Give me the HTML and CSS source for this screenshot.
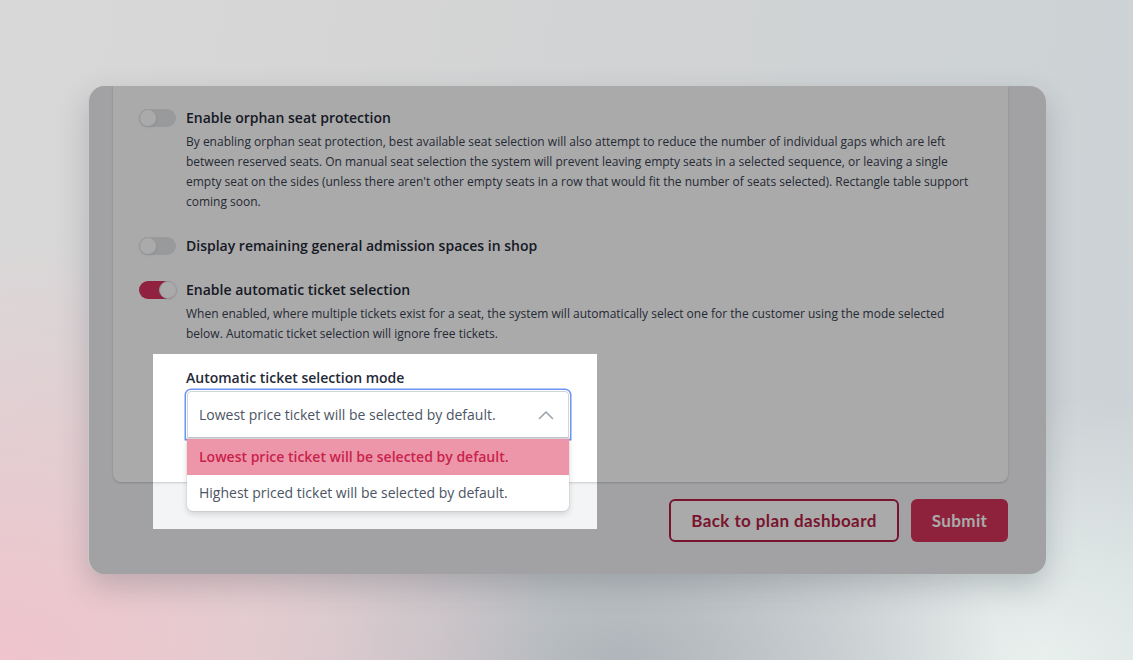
FILE: index.html
```html
<!DOCTYPE html>
<html lang="en">
<head>
<meta charset="utf-8">
<title>Plan settings</title>
<link rel="stylesheet" href="styles.css">
</head>
<body>
<div class="window">
  <div class="card">
    <div class="setting">
      <span class="toggle"><span class="knob"></span></span>
      <div class="setting-body">
        <div class="setting-title">Enable orphan seat protection</div>
        <p class="setting-desc">By enabling orphan seat protection, best available seat selection will also attempt to reduce the number of individual gaps which are left between reserved seats. On manual seat selection the system will prevent leaving empty seats in a selected sequence, or leaving a single empty seat on the sides (unless there aren't other empty seats in a row that would fit the number of seats selected). Rectangle table support coming soon.</p>
      </div>
    </div>
    <div class="setting">
      <span class="toggle"><span class="knob"></span></span>
      <div class="setting-body">
        <div class="setting-title">Display remaining general admission spaces in shop</div>
      </div>
    </div>
    <div class="setting">
      <span class="toggle on"><span class="knob"></span></span>
      <div class="setting-body">
        <div class="setting-title">Enable automatic ticket selection</div>
        <p class="setting-desc">When enabled, where multiple tickets exist for a seat, the system will automatically select one for the customer using the mode selected below. Automatic ticket selection will ignore free tickets.</p>
      </div>
    </div>
    <div class="mode">
      <div class="mode-label">Automatic ticket selection mode</div>
      <div class="select">
        <span class="select-value">Lowest price ticket will be selected by default.</span>
        <svg class="chevron" width="16" height="10" viewBox="0 0 16 10" aria-hidden="true"><path d="M1.5 8.5 L8 2 L14.5 8.5" fill="none" stroke="#9ca3af" stroke-width="1.6" stroke-linecap="round" stroke-linejoin="round"/></svg>
        <ul class="options">
          <li class="option selected">Lowest price ticket will be selected by default.</li>
          <li class="option">Highest priced ticket will be selected by default.</li>
        </ul>
      </div>
    </div>
  </div>
  <div class="actions">
    <button class="btn btn-outline">Back to plan dashboard</button>
    <button class="btn btn-primary">Submit</button>
  </div>
  <div class="spotlight"></div>
</div>
</body>
</html>
```
FILE: styles.css
```css
html, body {
  margin: 0;
  padding: 0;
}
body {
  width: 1133px;
  height: 660px;
  overflow: hidden;
  font-family: "Open Sans", "Liberation Sans", sans-serif;
  background:
    radial-gradient(ellipse 560px 420px at 0% 100%, rgba(240, 196, 204, 1), rgba(240, 196, 204, 0) 100%),
    radial-gradient(ellipse 380px 220px at 55% 100%, rgba(170, 176, 182, 0.85), rgba(170, 176, 182, 0) 100%),
    radial-gradient(ellipse 420px 260px at 92% 100%, rgba(232, 240, 238, 1), rgba(232, 240, 238, 0) 100%),
    linear-gradient(100deg, #d9d8d8 0%, #d2d3d4 50%, #ccd3d6 100%);
  padding-top: 86px;
  box-sizing: border-box;
}
.window {
  position: relative;
  margin-left: 88px;
  width: 958px;
  height: 488px;
  box-sizing: border-box;
  background: #f3f4f6;
  border-left: 1px solid #c6c8cc;
  border-radius: 16px;
  overflow: hidden;
  box-shadow: 0 12px 30px rgba(40, 50, 60, 0.22);
}
.card {
  margin-left: 24px;
  width: 895px;
  height: 396px;
  box-sizing: border-box;
  background: #ffffff;
  border-radius: 0 0 8px 8px;
  box-shadow: 0 1px 3px rgba(0, 0, 0, 0.12), 0 1px 2px rgba(0, 0, 0, 0.06);
  padding: 22px 26px 0 26px;
}
.setting {
  display: flex;
  gap: 10px;
  margin-bottom: 24px;
}
.setting-body {
  width: 790px;
}
.setting-title {
  font-size: 14px;
  font-weight: 600;
  line-height: 20px;
  color: #1f2937;
}
.setting-desc {
  margin: 4px 0 0 0;
  font-size: 12px;
  line-height: 20px;
  color: #374151;
}
.toggle {
  position: relative;
  flex: none;
  width: 37px;
  height: 18px;
  margin-top: 1px;
  border-radius: 9px;
  background: #e5e7eb;
}
.toggle .knob {
  position: absolute;
  left: 0;
  top: 0;
  width: 18px;
  height: 18px;
  box-sizing: border-box;
  border-radius: 50%;
  background: #ffffff;
  border: 1px solid #e1e3e7;
  box-shadow: 0 1px 2px rgba(0, 0, 0, 0.08);
}
.toggle.on {
  background: #d93360;
}
.toggle.on .knob {
  left: 20px;
}
.mode {
  margin-left: 47px;
  margin-top: 3px;
  width: 386px;
}
.mode-label {
  font-size: 14px;
  font-weight: 600;
  line-height: 20px;
  color: #1f2937;
  margin-bottom: 3px;
}
.select {
  position: relative;
  margin-left: 1px;
  width: 382px;
  height: 47px;
  box-sizing: border-box;
  border: 1px solid #d1d5db;
  border-radius: 4px 4px 0 0;
  background: #ffffff;
  box-shadow: 0 0 0 1px #ffffff, 0 0 0 2.5px #6b93f2;
  display: flex;
  align-items: center;
  padding: 0 14px 0 11px;
}
.select-value {
  flex: 1;
  font-size: 14px;
  color: #4b5563;
}
.chevron {
  flex: none;
}
.options {
  position: absolute;
  left: -1px;
  top: 46px;
  width: 382px;
  margin: 0;
  padding: 0;
  list-style: none;
  background: #ffffff;
  border-top: 1px solid #d1d5db;
  border-radius: 0 0 6px 6px;
  box-shadow: 0 3px 6px rgba(0, 0, 0, 0.14), 0 0 0 1px rgba(0, 0, 0, 0.05);
  overflow: hidden;
}
.option {
  height: 36px;
  line-height: 36px;
  padding-left: 12px;
  font-size: 14px;
  color: #4b5563;
}
.option.selected {
  background: #ee96a9;
  color: #c8234c;
  font-weight: 600;
}
.actions {
  display: flex;
  justify-content: flex-end;
  gap: 12px;
  width: 919px;
  margin-top: 17px;
}
.btn {
  height: 43px;
  box-sizing: border-box;
  border-radius: 6px;
  font-family: "Lato", "Liberation Sans", sans-serif;
  font-weight: 700;
  font-size: 17px;
  letter-spacing: 0.4px;
  cursor: pointer;
}
.btn-outline {
  width: 230px;
  background: #ffffff;
  border: 2px solid #b61f47;
  color: #b61f47;
}
.btn-primary {
  width: 97px;
  background: #d6335a;
  border: none;
  color: #ffffff;
}
.spotlight {
  position: absolute;
  left: 64px;
  top: 268px;
  width: 444px;
  height: 175px;
  box-shadow: 0 0 0 2000px rgba(0, 0, 0, 0.335);
  pointer-events: none;
}
```
